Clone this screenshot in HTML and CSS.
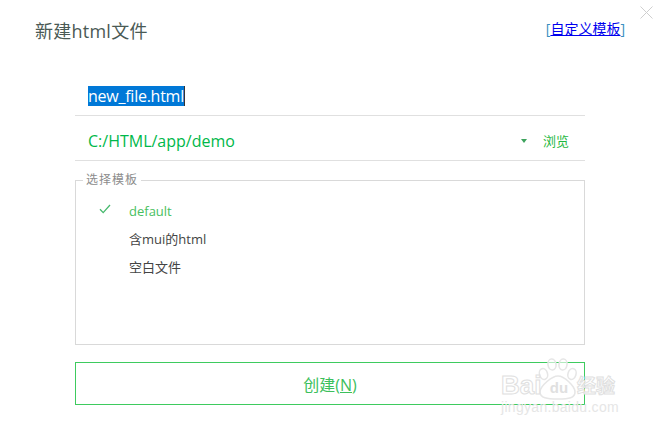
FILE: index.html
```html
<!DOCTYPE html>
<html lang="zh-CN">
<head>
<meta charset="utf-8">
<title>新建html文件</title>
<link rel="stylesheet" href="styles.css">
</head>
<body>
<div class="dialog">
  <svg class="close" width="13" height="13" viewBox="0 0 13 13"><path d="M0.5 0.5L12.5 12.5M12.5 0.5L0.5 12.5" stroke="#cfcfcf" fill="none"/></svg>
  <header class="head">
    <h1 class="title">新建html文件</h1>
    <span class="custom">[<a class="custom-link" href="#">自定义模板</a>]</span>
  </header>
  <main class="form">
    <div class="row name-row"><span class="selected">new_file.html</span></div>
    <div class="row path-row">
      <span class="path">C:/HTML/app/demo</span>
      <span class="arrow"></span>
      <span class="browse">浏览</span>
    </div>
    <fieldset class="templates">
      <legend class="legend">选择模板</legend>
      <ul class="list">
        <li class="item active">
          <svg class="check" width="12" height="10" viewBox="0 0 12 10"><path d="M1 5.2L4.2 8.6L11 1" stroke="#45b86c" stroke-width="1.3" fill="none"/></svg>
          default
        </li>
        <li class="item">含mui的html</li>
        <li class="item">空白文件</li>
      </ul>
    </fieldset>
    <button class="create">创建(<u>N</u>)</button>
  </main>
  <div class="mark">
    <svg class="paw" width="40" height="42" viewBox="0 0 40 42">
      <g fill="rgba(255,255,255,0.6)" stroke="#e6e6e6" stroke-width="1.6">
        <ellipse cx="5.5" cy="16" rx="4" ry="5.5" transform="rotate(-18 5.5 16)"/>
        <ellipse cx="14" cy="6.5" rx="4" ry="5.5" transform="rotate(-8 14 6.5)"/>
        <ellipse cx="25" cy="6.5" rx="4" ry="5.5" transform="rotate(8 25 6.5)"/>
        <ellipse cx="34" cy="16" rx="4" ry="5.5" transform="rotate(18 34 16)"/>
        <path d="M20 18C26 18 37 28 37 34C37 40 31 41 20 41C9 41 2 40 2 34C2 28 14 18 20 18Z"/>
      </g>
    </svg>
    <div class="mark-top">
      <span class="mark-brand">Bai</span>
      <span class="mark-du">du</span>
      <span class="mark-cn">经验</span>
    </div>
    <div class="mark-url">jingyan.baidu.com</div>
  </div>
</div>
</body>
</html>
```
FILE: styles.css
```css
* { box-sizing: border-box; }
html, body { margin: 0; padding: 0; background: #fff; }
body {
  width: 653px;
  height: 429px;
  overflow: hidden;
  font-family: "Open Sans", "Noto Sans CJK SC", sans-serif;
}
.dialog { position: relative; width: 653px; height: 429px; }
.close { position: absolute; left: 640px; top: 6px; }
.head {
  display: flex;
  justify-content: space-between;
  align-items: center;
  height: 62px;
  padding: 0 28px 0 35px;
}
.title { margin: 0; font-size: 18px; font-weight: 400; color: #4a5a55; line-height: 24px; letter-spacing: 0.25px; }
.custom { font-size: 14px; color: #3a8fc0; line-height: 20px; margin-top: -4px; }
.custom-link { color: #0000ee; }
.form { margin: 0 68px 0 75px; }
.row { display: flex; align-items: center; padding-left: 13px; border-bottom: 1px solid #e0e0e0; }
.name-row { height: 54px; padding-top: 15px; }
.selected {
  background: #0078d7;
  color: #fff;
  font-size: 16px;
  line-height: 20px;
  height: 20px;
  letter-spacing: -0.25px;
  border-right: 1px solid #333;
}
.path-row { height: 45px; padding-top: 4px; }
.path { flex: 1; font-size: 16px; color: #00b84a; position: relative; top: 1px; }
.arrow {
  width: 0;
  height: 0;
  border-left: 3px solid transparent;
  border-right: 3px solid transparent;
  border-top: 4px solid #3da35d;
  margin-right: 16px;
  position: relative;
  top: 1px;
}
.browse { font-size: 13px; color: #1fb83e; margin-right: 16px; }
.templates {
  margin: 13px 0 0;
  padding: 0;
  height: 171px;
  border: 1px solid #d9d9d9;
  min-width: 0;
}
.legend { margin-left: 7px; padding: 0 3px; font-size: 12px; line-height: 12px; color: #8c8c8c; letter-spacing: 1px; }
.list { list-style: none; margin: 0; padding: 11px 0 0 53px; }
.item { position: relative; height: 28px; line-height: 28px; font-size: 13px; color: #444; }
.item.active { color: #48c060; }
.check { position: absolute; left: -30px; top: 7px; }
.create {
  display: block;
  width: 510px;
  height: 43px;
  margin-top: 17px;
  padding: 0;
  background: #fff;
  border: 1px solid #3ecb5e;
  color: #3cc05c;
  font: 400 16px "Open Sans", "Noto Sans CJK SC", sans-serif;
}
.mark { position: absolute; left: 501px; top: 358px; width: 118px; height: 57px; }
.paw { position: absolute; left: 37px; top: 0; }
.mark-top { position: absolute; left: 0; top: 14px; display: flex; align-items: center; height: 26px; }
.mark-brand { width: 40px; font: 700 26px/26px "Liberation Sans", sans-serif; color: #fff; -webkit-text-stroke: 1px #e0e0e0; }
.mark-du { width: 36px; text-align: center; font: 700 15px/20px "Liberation Sans", sans-serif; color: #e0e0e0; margin-top: 6px; }
.mark-cn { font: 700 19px/26px "Noto Sans CJK SC", sans-serif; color: #fff; -webkit-text-stroke: 1px #e0e0e0; }
.mark-url { position: absolute; left: 0; top: 41px; font: 14px/16px "Liberation Sans", sans-serif; color: #e6e6e6; letter-spacing: 0.3px; white-space: nowrap; }
```
